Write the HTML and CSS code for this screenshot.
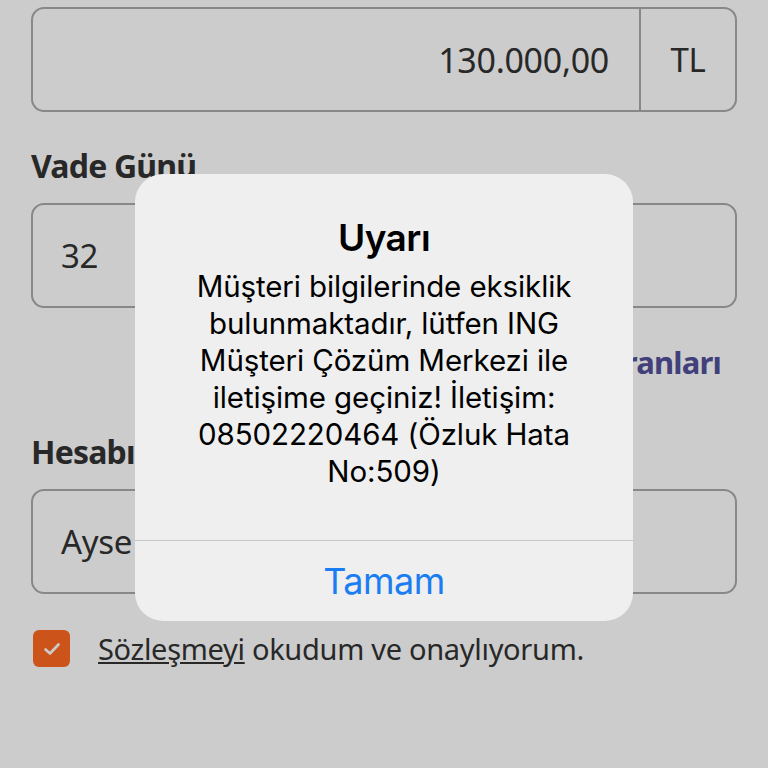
FILE: index.html
```html
<!DOCTYPE html>
<html lang="tr">
<head>
<meta charset="utf-8">
<link rel="stylesheet" href="styles.css">
</head>
<body>
<div class="page">
  <div class="field amount">
    <div class="amount-value">130.000,00</div>
    <div class="currency">TL</div>
  </div>
  <div class="label">Vade Günü</div>
  <div class="field"><span class="value">32</span></div>
  <div class="link-row"><span class="link">Faiz Oranları</span></div>
  <div class="label">Hesabım</div>
  <div class="field"><span class="value">Ayse</span></div>
  <div class="agree">
    <span class="checkbox"><svg width="22" height="22" viewBox="0 0 22 22"><path d="M4.5 11.5 L9 15.5 L17.5 6.5" fill="none" stroke="#fff" stroke-width="2.6" stroke-linecap="round" stroke-linejoin="round"/></svg></span>
    <span class="agree-text"><u>Sözleşmeyi</u> okudum ve onaylıyorum.</span>
  </div>
</div>
<div class="overlay">
  <div class="alert">
    <div class="alert-body">
      <div class="alert-title">Uyarı</div>
      <div class="alert-msg">Müşteri bilgilerinde eksiklik bulunmaktadır, lütfen ING Müşteri Çözüm Merkezi ile iletişime geçiniz! İletişim: 08502220464 (Özluk Hata No:509)</div>
    </div>
    <div class="alert-btn">Tamam</div>
  </div>
</div>
</body>
</html>
```
FILE: styles.css
```css
* { box-sizing: border-box; }
html, body { margin: 0; padding: 0; }
body {
  width: 768px;
  height: 768px;
  overflow: hidden;
  background: #fff;
  font-family: "Noto Sans", "Open Sans", sans-serif;
  color: #333;
}
.page {
  padding: 7px 31px 0 31px;
  display: flex;
  flex-direction: column;
}
.field {
  height: 105px;
  border: 2px solid #aaa;
  border-radius: 13px;
  display: flex;
  align-items: center;
  font-size: 33px;
  letter-spacing: -0.3px;
}
.field .value { padding-left: 28px; }
.amount { align-items: stretch; }
.amount-value {
  flex: 1;
  display: flex;
  align-items: center;
  justify-content: flex-end;
  padding-right: 30px;
  border-right: 2px solid #aaa;
  font-size: 34px;
}
.currency {
  width: 94px;
  display: flex;
  align-items: center;
  justify-content: center;
}
.label {
  font-weight: 700;
  font-size: 32px;
  letter-spacing: -0.8px;
  margin-top: 34px;
  margin-bottom: 17px;
  line-height: 40px;
}
.link-row {
  display: flex;
  justify-content: flex-end;
  padding-right: 16px;
  margin-top: 34px;
  height: 40px;
  line-height: 40px;
}
.link {
  color: #525199;
  font-weight: 700;
  font-size: 31px;
  letter-spacing: -0.8px;
}
.link-row + .label { margin-top: 50px; }
.agree {
  margin-top: 35px;
  display: flex;
  align-items: center;
  gap: 28px;
}
.checkbox {
  width: 37px;
  height: 37px;
  border-radius: 6px;
  background: #ff6a22;
  display: flex;
  align-items: center;
  justify-content: center;
  margin-left: 2px;
}
.agree-text {
  font-size: 29px;
  letter-spacing: -0.3px;
}
.overlay {
  position: fixed;
  inset: 0;
  background: rgba(0, 0, 0, 0.2);
  display: flex;
  justify-content: center;
  align-items: flex-start;
  padding-top: 174px;
}
.alert {
  width: 498px;
  background: #efefef;
  border-radius: 28px;
  display: flex;
  flex-direction: column;
  font-family: Inter, Roboto, sans-serif;
  color: #000;
  text-align: center;
}
.alert-body {
  padding: 41px 36px 0;
  border-bottom: 1px solid #c8c8c8;
  height: 367px;
}
.alert-title {
  font-weight: 600;
  font-size: 37px;
  line-height: 46px;
  letter-spacing: -0.5px;
}
.alert-msg {
  font-size: 29.5px;
  line-height: 37px;
  letter-spacing: -0.1px;
  margin-top: 7px;
}
.alert-btn {
  height: 80px;
  display: flex;
  align-items: center;
  justify-content: center;
  color: #1a7ef2;
  font-size: 36px;
  letter-spacing: -0.5px;
}
```
